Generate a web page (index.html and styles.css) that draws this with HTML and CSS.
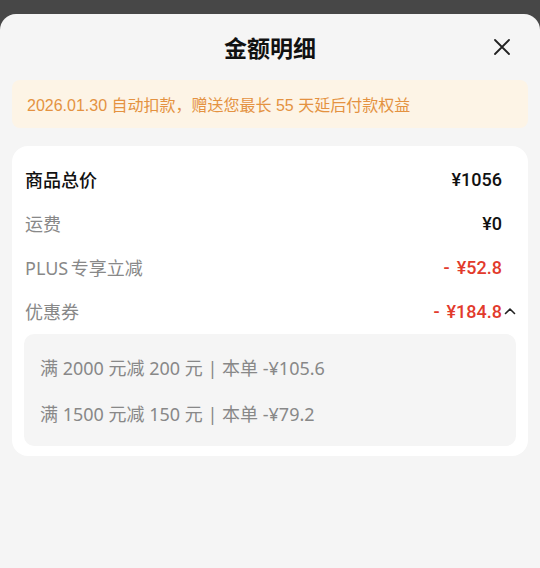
FILE: index.html
```html
<!DOCTYPE html>
<html lang="zh-CN">
<head>
  <meta charset="UTF-8">
  <meta name="viewport" content="width=device-width, initial-scale=1.0">
  <title>金额明细</title>
  <link rel="stylesheet" href="styles.css">
</head>
<body>
  <div class="sheet">
    <div class="header">
      <h2>金额明细</h2>
      <span class="close">
        <svg width="18" height="18" viewBox="0 0 18 18"><path d="M2 2L16 16M16 2L2 16" stroke="#222" stroke-width="1.8" fill="none" stroke-linecap="round"/></svg>
      </span>
    </div>
    <div class="notice">2026.01.30 自动扣款，赠送您最长 55 天延后付款权益</div>
    <div class="card">
      <div class="row">
        <span class="label main">商品总价</span>
        <span class="val">¥1056</span>
      </div>
      <div class="row">
        <span class="label">运费</span>
        <span class="val">¥0</span>
      </div>
      <div class="row">
        <span class="label">PLUS 专享立减</span>
        <span class="val red"><span class="minus">-</span>¥52.8</span>
      </div>
      <div class="row">
        <span class="label">优惠券</span>
        <span class="val red"><span class="minus">-</span>¥184.8</span>
        <span class="chev">
          <svg width="12" height="8" viewBox="0 0 12 8"><path d="M1.5 6.5L6 2L10.5 6.5" stroke="#222" stroke-width="1.6" fill="none" stroke-linecap="round" stroke-linejoin="round"/></svg>
        </span>
      </div>
      <div class="coupons">
        <div class="coupon">满 2000 元减 200 元 | 本单 -¥105.6</div>
        <div class="coupon">满 1500 元减 150 元 | 本单 -¥79.2</div>
      </div>
    </div>
  </div>
</body>
</html>
```

FILE: styles.css
```css
html, body {
  margin: 0;
  height: 100%;
}
body {
  background: #474747;
  font-family: "Liberation Sans", "Noto Sans CJK SC", sans-serif;
  padding-top: 14px;
  box-sizing: border-box;
}
.sheet {
  background: #f5f5f5;
  border-radius: 16px 16px 0 0;
  min-height: 100%;
  padding: 0 12px;
}
.header {
  height: 66px;
  display: flex;
  align-items: center;
  justify-content: center;
  position: relative;
}
.header h2 {
  margin: 0;
  font-size: 23px;
  font-weight: 700;
  color: #111;
}
.close {
  position: absolute;
  right: 17px;
  top: 24px;
  display: flex;
}
.notice {
  height: 48px;
  display: flex;
  align-items: center;
  background: #fdf4e6;
  border-radius: 8px;
  padding: 0 15px;
  color: #e49241;
  font-size: 16px;
}
.card {
  margin-top: 18px;
  background: #fff;
  border-radius: 16px;
  padding: 11px 12px 10px;
}
.row {
  height: 44px;
  display: flex;
  align-items: center;
  padding: 0 14px 0 1px;
}
.label {
  flex: 1;
  font-family: "Noto Sans", "Noto Sans CJK SC", sans-serif;
  font-size: 18px;
  color: #888;
  word-spacing: -2px;
}
.label.main {
  color: #111;
  font-weight: 500;
}
.val {
  font-family: Roboto, "Noto Sans", sans-serif;
  font-weight: 500;
  font-size: 18px;
  color: #111;
}
.val.red {
  color: #e23a2c;
}
.minus {
  margin-right: 7px;
}
.chev {
  width: 14px;
  margin-right: -14px;
  display: flex;
  justify-content: flex-end;
}
.coupons {
  margin-top: 1px;
  background: #f5f5f5;
  border-radius: 10px;
  padding: 10px 16px;
}
.coupon {
  height: 46px;
  display: flex;
  align-items: center;
  font-family: "Noto Sans", "Noto Sans CJK SC", sans-serif;
  font-size: 18px;
  color: #888;
}
```
